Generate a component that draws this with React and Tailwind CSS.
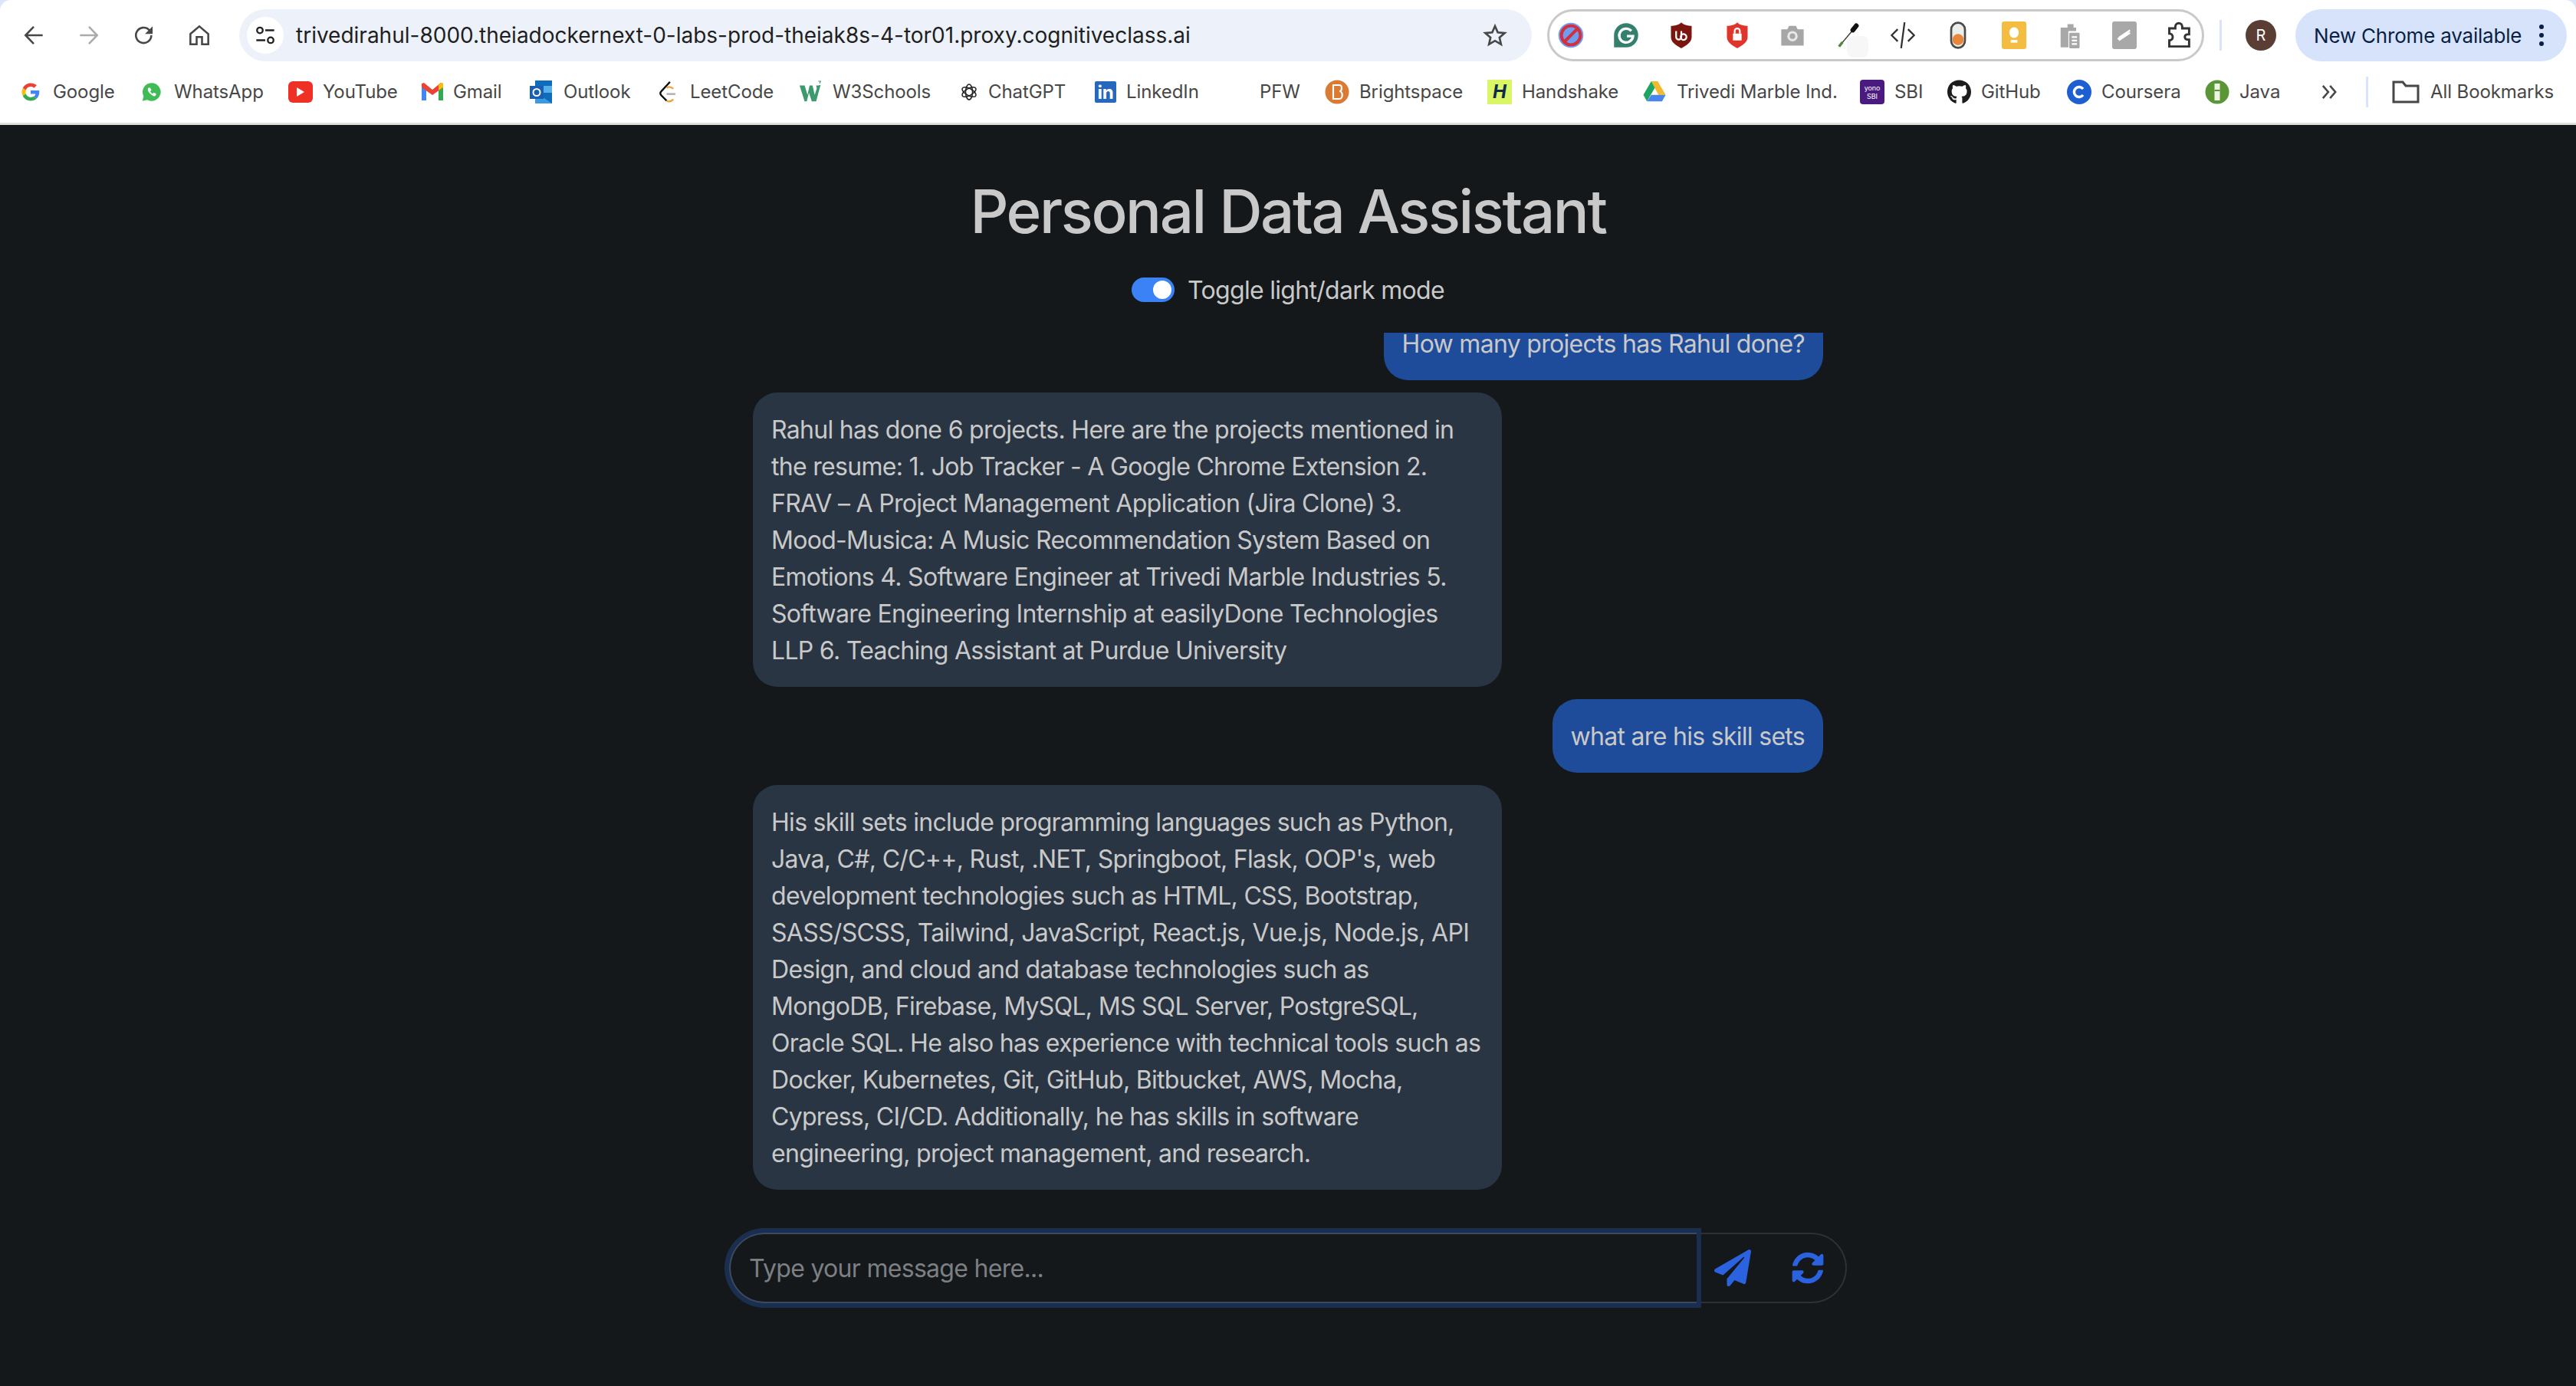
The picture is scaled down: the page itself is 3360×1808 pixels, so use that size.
import React from "react";
import { FaPaperPlane, FaSyncAlt, FaGithub } from "react-icons/fa";

const S = ({ children, w = 32, h = 32, vb = "0 0 32 32", className = "" }) => (
  <svg width={w} height={h} viewBox={vb} className={`shrink-0 ${className}`}>{children}</svg>
);

const Back = ({ c = "#474747", flip }) => (
  <S w={28} h={28} vb="0 0 24 24">
    <g transform={flip ? "rotate(180 12 12)" : ""} stroke={c} strokeWidth="2.2" fill="none">
      <path d="M22 12H3M12 2.5 2.8 12l9.2 9.5" />
    </g>
  </S>
);
const Reload = () => (
  <S w={28} h={28} vb="0 0 24 24">
    <path d="M20 12a8.6 8.6 0 1 1-2.6-6.1L20.5 9" stroke="#474747" strokeWidth="2.2" fill="none" />
    <path d="M21.5 2v8.5H13" fill="#474747" />
  </S>
);
const Home = () => (
  <S w={28} h={28} vb="0 0 24 24">
    <path d="M2 10.5 12 2l10 8.5V22h-7v-8H9v8H2z" stroke="#474747" strokeWidth="2.2" fill="none" />
  </S>
);
const Tune = () => (
  <S w={28} h={28} vb="0 0 24 24">
    <circle cx="6" cy="6.5" r="3.2" stroke="#222" strokeWidth="2" fill="none" />
    <path d="M12 6.5h10M2 17.5h10" stroke="#222" strokeWidth="2.2" />
    <circle cx="18" cy="17.5" r="3.2" stroke="#222" strokeWidth="2" fill="none" />
  </S>
);
const Star = () => (
  <S w={32} h={32} vb="0 0 24 24">
    <path d="m12 3 2.7 6.2 6.8.6-5.1 4.5 1.5 6.6L12 17.4l-5.9 3.5 1.5-6.6-5.1-4.5 6.8-.6z" stroke="#474747" strokeWidth="2" fill="none" />
  </S>
);

const ext = [
  <S key="a" w={36} h={36}>
    <circle cx="16" cy="16" r="14.5" fill="#6f9df0" />
    <circle cx="16" cy="16" r="11" fill="none" stroke="#d1303f" strokeWidth="3.5" />
    <path d="M8 24 24 8" stroke="#d1303f" strokeWidth="3.5" />
  </S>,
  <S key="b" w={36} h={36}>
    <path d="M16 2a14 14 0 1 1 0 28H2V16A14 14 0 0 1 16 2z" fill="#34806e" />
    <path d="M22 11a8 8 0 1 0 2 6h-7" stroke="#fff" strokeWidth="3" fill="none" />
  </S>,
  <S key="c" w={36} h={36}>
    <path d="M16 1c3 3 8 4 12 4v13c0 6-6 10-12 13C10 28 4 24 4 18V5c4 0 9-1 12-4z" fill="#7b150d" />
    <path d="M10 11v7a3 3 0 0 0 6 0v-7M17 15a3.4 3.4 0 1 1 0 6 3.4 3.4 0 0 1 0-6z" stroke="#fff" strokeWidth="2" fill="none" />
  </S>,
  <S key="d" w={36} h={36}>
    <path d="M16 1c3 3 8 4 12 4v13c0 6-6 10-12 13C10 28 4 24 4 18V5c4 0 9-1 12-4z" fill="#e0352b" />
    <rect x="11" y="14" width="10" height="8" fill="#fff" />
    <path d="M13 14v-3a3 3 0 0 1 6 0v3" stroke="#fff" strokeWidth="2" fill="none" />
  </S>,
  <S key="e" w={36} h={36}>
    <path d="M3 9h7l2-4h8l2 4h7v19H3z" fill="#a6a6a6" />
    <circle cx="16" cy="17" r="6" fill="#e8e8e8" />
    <circle cx="16" cy="17" r="3.2" fill="#a6a6a6" />
  </S>,
  <div key="f" className="relative w-[36px] h-[36px]">
    <S w={36} h={36}>
      <path d="M6 29 22 10" stroke="#333" strokeWidth="1.2" />
      <path d="M6 29l4-5" stroke="#4e8a3a" strokeWidth="3" />
      <path d="M22 10l4-5" stroke="#111" strokeWidth="5.5" strokeLinecap="round" />
    </S>
    <div className="absolute left-[17px] top-[19px] w-[28px] h-[28px] rounded-[8px] bg-[#f7f7f7]" />
  </div>,
  <S key="g" w={36} h={36}>
    <path d="M10 9 3 16l7 7M22 9l7 7-7 7M18 1l-4 30" stroke="#303030" strokeWidth="2" fill="none" />
  </S>,
  <S key="h" w={36} h={36}>
    <rect x="8" y="1.5" width="16" height="29" rx="8" fill="#eceeec" stroke="#4a4a4a" strokeWidth="2.4" />
    <circle cx="16" cy="21" r="6.5" fill="#e9863c" />
  </S>,
  <div key="i" className="w-[32px] h-[36px] rounded-[3px] bg-[#f4bd42] flex items-center justify-center">
    <S w={28} h={28}>
      <ellipse cx="16" cy="12" rx="7" ry="8" fill="#fff" />
      <rect x="11" y="23" width="10" height="4" fill="#fff" />
    </S>
  </div>,
  <S key="j" w={36} h={36}>
    <path d="M6 7h8V3h7v4h3v4h-9v19H6z" fill="#a8a8a8" />
    <rect x="16" y="13" width="12" height="18" rx="1" fill="#a8a8a8" />
    <path d="M19 18h6M19 22h6M19 26h6" stroke="#fff" strokeWidth="2" />
  </S>,
  <div key="k" className="w-[32px] h-[36px] rounded-[3px] bg-[#a8a8a8] flex items-center justify-center">
    <S w={26} h={26}>
      <path d="M5 22 25 12M7 20l18-12M7 24l18-12" stroke="#fff" strokeWidth="2.6" fill="none" />
    </S>
  </div>,
  <S key="l" w={36} h={36} vb="0 0 32 32">
    <path d="M4 8h7V6a4 4 0 0 1 8 0v2h8v7h-2a3 3 0 0 0 0 6h2v8H4v-7a4 4 0 0 0 0-8z" stroke="#333" strokeWidth="2.6" fill="none" />
  </S>,
];

const GoogleG = () => (
  <S w={24} h={28} vb="0 0 48 48">
    <path fill="#EA4335" d="M24 10c3.5 0 6.6 1.200 9 3.400l6.700-6.700C35.600 3 30.200 1 24 1 15 1 7.300 6.100 3.500 13.600l7.800 6C13.200 14 18.100 10 24 10z" />
    <path fill="#4285F4" d="M46.500 24.500c0-1.600-.1-3.100-.4-4.500H24v8.800h12.600c-.5 2.900-2.200 5.300-4.600 6.900l7.500 5.800c4.400-4 7-10 7-17z" />
    <path fill="#FBBC05" d="M11.300 28.500A14 14 0 0 1 10.500 24c0-1.600.3-3.100.8-4.500l-7.800-6A23 23 0 0 0 1 24c0 3.700.9 7.200 2.500 10.400z" />
    <path fill="#34A853" d="M24 47c6.200 0 11.400-2 15.200-5.500L32 35.700c-2 1.400-4.700 2.300-8 2.300-5.900 0-10.800-4-12.600-9.400l-7.900 6C7.300 41.900 15 47 24 47z" />
  </S>
);

const bookmarks = [
  { t: "Google", w: "w-[157px]", i: <GoogleG />, g: "gap-[17px]" },
  { t: "WhatsApp", w: "w-[191px]", g: "gap-[17px]", i: (
    <S w={25} h={28}><path d="M16 1a15 15 0 0 0-13 22L1 31l8-2A15 15 0 1 0 16 1z" fill="#3fbc55" /><path d="M11 9c-2 2-1 6 3 10s7 5 9 3l1-3-4-2-2 2c-2-1-3-3-4-4l2-2-2-4z" fill="#fff" /></S>
  ) },
  { t: "YouTube", w: "w-[174px]", i: (
    <div className="w-[32px] h-[28px] rounded-[6px] bg-[#ee3124] flex items-center justify-center">
      <div className="w-0 h-0 border-y-[6px] border-y-transparent border-l-[10px] border-l-white" />
    </div>
  ) },
  { t: "Gmail", w: "w-[140px]", i: (
    <S w={28} h={26} vb="0 0 28 26">
      <path d="M0 4v20h6V9z" fill="#4285F4" /><path d="M22 9v15h6V4z" fill="#34A853" />
      <path d="M0 2v5l14 10L28 7V2l-3-1-11 9L3 1z" fill="#EA4335" /><path d="M22 4v7l6-4V2l-3-1z" fill="#FBBC05" />
    </S>
  ) },
  { t: "Outlook", w: "w-[169px]", i: (
    <S w={32} h={32}>
      <rect x="8" y="1" width="22" height="30" fill="#0f6cbd" /><rect x="19" y="8" width="11" height="9" fill="#55b0ea" /><path d="M8 31V16l22 15z" fill="#3b9be0" />
      <rect x="1" y="8" width="18" height="17" fill="#1a5fb4" /><circle cx="10" cy="16.500" r="4.500" fill="none" stroke="#fff" strokeWidth="2" />
    </S>
  ) },
  { t: "LeetCode", w: "w-[182px]", i: (
    <S w={28} h={32}><path d="M17 1 4 15c-2 2-2 4 0 6l8 8" stroke="#111" strokeWidth="2.600" fill="none" /><path d="M12 10c3-3 6-2 10 1M12 29c3 2 7 1 10-2" stroke="#f0a030" strokeWidth="2.600" fill="none" /><path d="M12 19h13" stroke="#b3b3b3" strokeWidth="3" /></S>
  ) },
  { t: "W3Schools", w: "w-[211px]", i: (
    <S w={32} h={30}><path d="M1 7h7l4 13 3-13h4l3 13 3-9-1-4h6l-6 22h-6l-4-12-3 12H8z" fill="#3c9a6d" /><path d="M27 1h4M30 1l-1 3M28 7h2" stroke="#3c9a6d" strokeWidth="1.200" /></S>
  ) },
  { t: "ChatGPT", w: "w-[176px]", i: (
    <S w={24} h={28} vb="0 0 24 24"><g fill="none" stroke="#222" strokeWidth="1.500"><ellipse cx="12" cy="12" rx="4.500" ry="10" /><ellipse cx="12" cy="12" rx="4.500" ry="10" transform="rotate(60 12 12)" /><ellipse cx="12" cy="12" rx="4.500" ry="10" transform="rotate(120 12 12)" /></g></S>
  ) },
  { t: "LinkedIn", w: "w-[215px]", i: (
    <div className="w-[28px] h-[28px] rounded-[2px] bg-[#2568bd] flex items-end justify-center text-white font-bold text-[24px] leading-[26px]">in</div>
  ) },
  { t: "PFW", w: "w-[85px]", i: null },
  { t: "Brightspace", w: "w-[212px]", i: (
    <S w={32} h={32}><circle cx="16" cy="16" r="15.500" fill="#da7a33" /><path d="M11 7h8c4 0 4 8 0 8 5 0 5 10 0 10h-8z" stroke="#fff" strokeWidth="2.200" fill="none" /></S>
  ) },
  { t: "Handshake", w: "w-[203px]", i: (
    <div className="w-[32px] h-[32px] bg-[#d8f665] flex items-center justify-center font-bold italic text-[#0f2b4b] text-[24px] leading-none">H</div>
  ) },
  { t: "Trivedi Marble Ind.", w: "w-[283px]", i: (
    <S w={31} h={30}><path d="M11 1h9l11 19h-10z" fill="#f5b92e" /><path d="M11 1 0 20l5 9 11-19z" fill="#1fa463" /><path d="M5 29h21l5-9H11z" fill="#4a86e8" /></S>
  ) },
  { t: "SBI", w: "w-[114px]", i: (
    <div className="w-[32px] h-[32px] rounded-[4px] bg-[#4b1a80] flex flex-col items-center justify-center text-white text-[9px] leading-[11px]"><span>yono</span><span>SBI</span></div>
  ) },
  { t: "GitHub", w: "w-[156px]", i: <FaGithub className="w-[31px] h-[32px] shrink-0 text-[#1c1c1c]" /> },
  { t: "Coursera", w: "w-[180px]", i: (
    <S w={32} h={32}><circle cx="16" cy="16" r="16" fill="#1d5fd1" /><path d="M21 12a6.500 6.500 0 1 0 0 8" stroke="#fff" strokeWidth="3.500" fill="none" /></S>
  ) },
  { t: "Java", w: "w-[124px]", i: (
    <S w={32} h={32}><circle cx="16" cy="16" r="15.500" fill="#5a9636" /><rect x="12.500" y="5" width="7" height="22" fill="#eef3e6" /><path d="M12.500 14h7" stroke="#5a9636" strokeWidth="2" /></S>
  ) },
];

const line1 = ["Rahul has done 6 projects. Here are the projects mentioned in", "the resume: 1. Job Tracker - A Google Chrome Extension 2.", "FRAV – A Project Management Application (Jira Clone) 3.", "Mood-Musica: A Music Recommendation System Based on", "Emotions 4. Software Engineer at Trivedi Marble Industries 5.", "Software Engineering Internship at easilyDone Technologies", "LLP 6. Teaching Assistant at Purdue University"];
const line2 = ["His skill sets include programming languages such as Python,", "Java, C#, C/C++, Rust, .NET, Springboot, Flask, OOP's, web", "development technologies such as HTML, CSS, Bootstrap,", "SASS/SCSS, Tailwind, JavaScript, React.js, Vue.js, Node.js, API", "Design, and cloud and database technologies such as", "MongoDB, Firebase, MySQL, MS SQL Server, PostgreSQL,", "Oracle SQL. He also has experience with technical tools such as", "Docker, Kubernetes, Git, GitHub, Bitbucket, AWS, Mocha,", "Cypress, CI/CD. Additionally, he has skills in software", "engineering, project management, and research."];

const UserMsg = ({ children }) => (
  <div className="self-end shrink-0 rounded-[32px] bg-[#1f4c9a] px-[24px] pt-[25px] pb-[23px] leading-[48px] whitespace-nowrap">{children}</div>
);
const BotMsg = ({ lines }) => (
  <div className="self-start shrink-0 w-[977px] rounded-[32px] bg-[#293543] px-[24px] pt-[25px] pb-[23px] leading-[48px] whitespace-nowrap">
    {lines.map((l) => <div key={l}>{l}</div>)}
  </div>
);

export default function App() {
  return (
    <div className="h-screen w-full overflow-hidden flex flex-col bg-[#dbe6f8] font-['Inter','Liberation_Sans',sans-serif]">
      <header className="shrink-0 h-[163px] rounded-t-[14px] bg-white border-b-[3px] border-[#dfdfdb] text-[#474747]">
        <div className="h-[92px] pt-[12px] flex">
          <div className="shrink-0 w-[312px] h-[68px] flex items-center">
            <div className="w-[72px] pl-[30px]"><Back /></div>
            <div className="w-[72px] pl-[30px]"><Back c="#ababab" flip /></div>
            <div className="w-[72px] pl-[30px]"><Reload /></div>
            <div className="w-[96px] pl-[30px]"><Home /></div>
          </div>
          <div className="shrink-0 w-[1686px] h-[68px] rounded-full bg-[#edf2fa] flex items-center pl-[10px] pr-[32px]">
            <div className="w-[48px] h-[48px] rounded-full bg-white flex items-center justify-center shrink-0"><Tune /></div>
            <span className="ml-[16px] flex-1 text-[28px] text-[#1f1f1f] whitespace-nowrap">trivedirahul-8000.theiadockernext-0-labs-prod-theiak8s-4-tor01.proxy.cognitiveclass.ai</span>
            <Star />
          </div>
          <div className="shrink-0 ml-[20px] w-[857px] h-[68px] rounded-full border-[3px] border-[#c9c9c9] flex items-center gap-[36.2px] pl-[10px]">
            {ext.map((e, i) => (
              <div key={i} className="w-[36px] flex justify-center shrink-0">{e}</div>
            ))}
          </div>
          <div className="shrink-0 ml-[20px] mt-[14px] w-[3px] h-[40px] bg-[#d8e4f9]" />
          <div className="shrink-0 ml-[31px] mt-[14px] w-[40px] h-[40px] rounded-full bg-[#5a3d33] text-white text-[20px] flex items-center justify-center">R</div>
          <div className="shrink-0 ml-[25px] w-[354px] h-[68px] rounded-full bg-[#d6e3fb] flex items-center pl-[24px] text-[#0a1f44] text-[26px] tracking-[-0.2px] whitespace-nowrap">
            New Chrome available
            <div className="ml-[23px] flex flex-col gap-[5px]">
              <span className="w-[6px] h-[6px] rounded-full bg-[#0a1f44]" />
              <span className="w-[6px] h-[6px] rounded-full bg-[#0a1f44]" />
              <span className="w-[6px] h-[6px] rounded-full bg-[#0a1f44]" />
            </div>
          </div>
        </div>
        <div className="h-[56px] pl-[28px] flex items-center text-[24px] tracking-[-0.1px] whitespace-nowrap">
          {bookmarks.map((b) => (
            <div key={b.t} className={`shrink-0 flex items-center gap-[13px] ${b.w} ${b.g || ""}`}>
              {b.i}
              <span>{b.t}</span>
            </div>
          ))}
          <div className="w-[120px] pl-[24px] flex items-center h-[40px] shrink-0">
            <S w={28} h={28} vb="0 0 24 24"><path d="m5 5 6 7-6 7M13 5l6 7-6 7" stroke="#474747" strokeWidth="2.200" fill="none" /></S>
            <div className="ml-[34px] w-[3px] h-[40px] bg-[#d8e4f9]" />
          </div>
          <div className="flex items-center gap-[14px] shrink-0">
            <S w={36} h={32} vb="0 0 36 32"><path d="M2 28V3h12l4 5h16v21H2z" stroke="#474747" strokeWidth="3" fill="none" /></S>
            <span>All Bookmarks</span>
          </div>
        </div>
      </header>

      <main className="flex-1 min-h-0 bg-[#14181a] text-[#c9c9c9] text-[32px] tracking-[-0.7px]">
        <h1 className="pt-[73px] text-center text-[78px] leading-[80px] font-medium tracking-[-2.4px]">Personal Data Assistant</h1>
        <div className="mt-[46px] h-[32px] flex items-center justify-center gap-[17px]">
          <div className="w-[56px] h-[32px] rounded-full bg-[#3b82f6] flex items-center justify-end pr-[4px]">
            <div className="w-[24px] h-[24px] rounded-full bg-white" />
          </div>
          <span className="pt-[2px]">Toggle light/dark mode</span>
        </div>
        <div className="mt-[40px] mx-auto w-[1396px] h-[1118px] overflow-hidden flex flex-col justify-end gap-[16px]">
          <UserMsg>How many projects has Rahul done?</UserMsg>
          <BotMsg lines={line1} />
          <UserMsg>what are his skill sets</UserMsg>
          <BotMsg lines={line2} />
        </div>
        <form className="mt-[56px] mx-auto w-[1458px] h-[92px] flex">
          <input
            placeholder="Type your message here..."
            className="w-[1262px] h-[92px] pl-[24px] rounded-l-full rounded-r-none bg-transparent border-2 border-r-0 border-[#3a4a63] ring-[6px] ring-[#1a2f50] outline-none text-[32px] placeholder:text-[#7c7f83]"
          />
          <div className="flex-1 ml-[6px] border-2 border-l-0 border-[#2e3032] rounded-r-full flex items-center pl-[17px]">
            <FaPaperPlane className="w-[48px] h-[48px] text-[#2a62e0]" />
            <FaSyncAlt className="ml-[53px] w-[42px] h-[42px] text-[#2a62e0]" />
          </div>
        </form>
      </main>
    </div>
  );
}
